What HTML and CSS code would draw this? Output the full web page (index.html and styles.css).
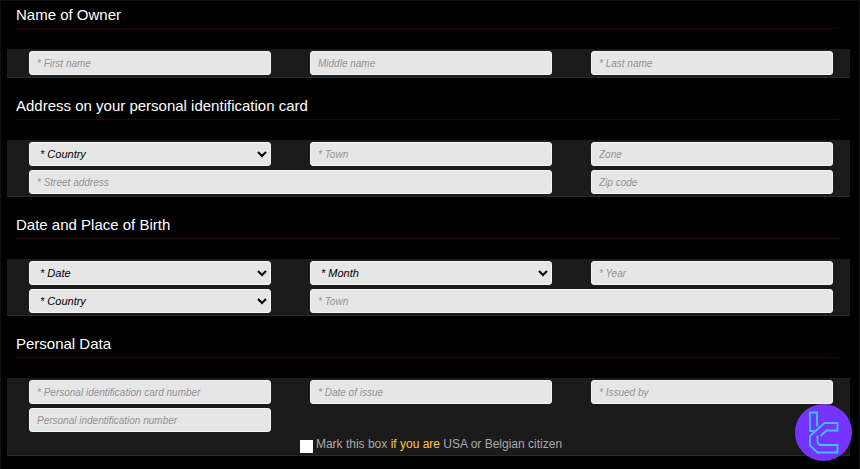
FILE: index.html
```html
<!DOCTYPE html>
<html lang="en">
<head>
    <meta charset="UTF-8">
    <meta name="viewport" content="width=device-width, initial-scale=1.0">
    <title>Personal Details</title>
    <link rel="stylesheet" href="styles.css">
</head>
<body>

<form class="owner-form">
    <h2>Name of Owner</h2>
    <div class="panel">
        <div class="fields">
            <input type="text" aria-label="First name" placeholder="* First name">
            <input type="text" aria-label="Middle name" placeholder="Middle name">
            <input type="text" aria-label="Last name" placeholder="* Last name">
        </div>
    </div>

    <h2>Address on your personal identification card</h2>
    <div class="panel">
        <div class="fields">
            <select aria-label="Country"><option>* Country</option></select>
            <input type="text" aria-label="Town" placeholder="* Town">
            <input type="text" aria-label="Zone" placeholder="Zone">
            <input type="text" class="wide" aria-label="Street address" placeholder="* Street address">
            <input type="text" aria-label="Zip code" placeholder="Zip code">
        </div>
    </div>

    <h2>Date and Place of Birth</h2>
    <div class="panel">
        <div class="fields">
            <select aria-label="Date"><option>* Date</option></select>
            <select aria-label="Month"><option>* Month</option></select>
            <input type="text" aria-label="Year" placeholder="* Year">
            <select aria-label="Country of birth"><option>* Country</option></select>
            <input type="text" class="wide" aria-label="Town of birth" placeholder="* Town">
        </div>
    </div>

    <h2>Personal Data</h2>
    <div class="panel">
        <div class="fields">
            <input type="text" aria-label="Personal identification card number" placeholder="* Personal identification card number">
            <input type="text" aria-label="Date of issue" placeholder="* Date of issue">
            <input type="text" aria-label="Issued by" placeholder="* Issued by">
            <input type="text" aria-label="Personal identification number" placeholder="Personal indentification number">
        </div>
        <div class="citizen">
            <input type="checkbox" id="citizen">
            <label for="citizen">Mark this box <span class="highlight">if you are</span> USA or Belgian citizen</label>
        </div>
    </div>
</form>

<svg class="badge" viewBox="0 0 57 57" aria-hidden="true">
    <circle cx="28.5" cy="28.5" r="28.5" fill="#7433ff"/>
    <g fill="none" stroke="#35c8f5" stroke-width="1.8">
        <path d="M22 22.500V8.500H15V27h4"/>
        <path d="M22.500 31.500V38.500L24.500 41H42.500V48.500H22.500L15 41.500V32L29.500 19H42.500V26.500H31.500L25.500 32"/>
    </g>
</svg>

</body>
</html>
```

FILE: styles.css
```css
* {
    box-sizing: border-box;
}
body {
    margin: 0;
    min-height: 100vh;
    background: black;
    color: white;
    font-family: "Liberation Sans", Arial, sans-serif;
    border: 1px solid #111;
    border-bottom: none;
}
.owner-form {
    padding: 4px 9px 0 6px;
}
h2 {
    margin: 18px 10px 20px 9px;
    padding-bottom: 3px;
    border-bottom: 1px solid #300004;
    font-size: 15px;
    font-weight: normal;
    line-height: 20px;
}
h2:first-child {
    margin-top: 0;
}
.panel {
    padding: 2px 17px 2px 22px;
    background: #1b1b1b;
    border-bottom: 1px solid #2a2a2a;
}
.fields {
    display: grid;
    grid-template-columns: repeat(3, 1fr);
    gap: 4px 39px;
}
.fields input,
.fields select {
    width: 100%;
    min-width: 0;
    height: 24px;
    padding: 0 7px;
    border: 1px solid #f5f5f5;
    border-radius: 3px;
    background-color: #e6e6e6;
    color: black;
    font-family: inherit;
    font-size: 10px;
    font-style: italic;
}
.fields select {
    padding: 0 0 0 6px;
    font-size: 11px;
}
.fields input::placeholder {
    color: #929292;
}
.fields .wide {
    grid-column: span 2;
}
.citizen {
    display: flex;
    justify-content: center;
    gap: 3px;
    height: 21px;
    color: #aaa;
    font-size: 12px;
    line-height: 24px;
}
.citizen input {
    width: 13px;
    height: 13px;
    margin: 8px 0 0;
    appearance: none;
    background: white;
}
.citizen input:checked {
    background: #ffc840;
}
.highlight {
    color: #ffc840;
}
.badge {
    position: fixed;
    right: 8px;
    bottom: 8px;
    width: 57px;
    height: 57px;
}
```
